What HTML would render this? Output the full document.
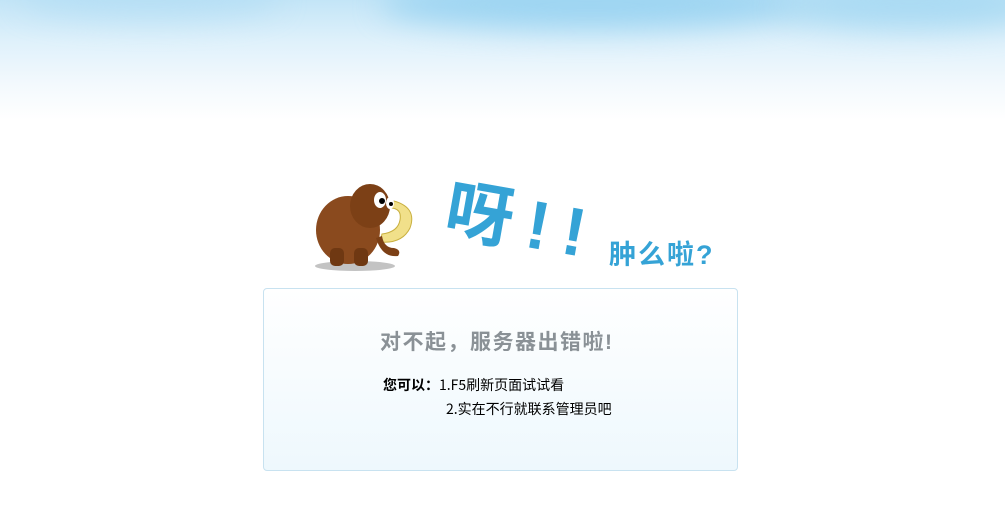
<!DOCTYPE html>
<html><head><meta charset="utf-8"><style>
body{margin:0;width:1005px;height:507px;background:#fff;position:relative;overflow:hidden;font-family:"Liberation Sans","Noto Sans CJK SC",sans-serif}
.sky{position:absolute;left:0;top:0;width:1005px;height:120px;background:linear-gradient(#c3e5f7 0%,#dff1fb 35%,#f3f9fd 70%,#fff 100%)}
.c{position:absolute;border-radius:50%;filter:blur(14px)}
.ya{position:absolute;left:452px;top:176px;font-size:68px;font-weight:bold;color:#35a3d6;transform:rotate(10deg);transform-origin:left top;letter-spacing:14px;line-height:1}
.zm{position:absolute;left:609px;top:242px;font-size:27px;font-weight:bold;color:#35a3d6;line-height:1;letter-spacing:2px}
.box{position:absolute;left:263px;top:288px;width:473px;height:181px;border:1px solid #c8e2f0;border-radius:4px;background:linear-gradient(#fff,#eef8fd)}
.t1{position:absolute;left:380px;top:326px;font-size:21px;font-weight:bold;color:#8a9196;letter-spacing:1.5px}
.t2{position:absolute;left:383px;top:373px;font-size:14px;color:#000;line-height:24px}
.m{font-family:'Noto Sans CJK SC',monospace;font-size:14px}
</style></head><body>
<div class="sky">
<div class="c" style="left:380px;top:-20px;width:420px;height:50px;background:rgba(140,205,240,.7)"></div>
<div class="c" style="left:780px;top:-15px;width:260px;height:45px;background:rgba(150,210,240,.6)"></div>
<div class="c" style="left:20px;top:-20px;width:260px;height:40px;background:rgba(170,218,243,.5)"></div>
</div>
<svg style="position:absolute;left:310px;top:178px" width="110" height="96" viewBox="0 0 110 96">
<ellipse cx="45" cy="88" rx="40" ry="5" fill="#888" opacity=".5"/>
<path d="M80 22 Q108 28 100 50 Q92 66 70 64 L72 56 Q88 54 90 42 Q92 30 80 30Z" fill="#f1e08a" stroke="#c9b040"/>
<ellipse cx="38" cy="52" rx="32" ry="34" fill="#8a4a1e"/>
<ellipse cx="60" cy="28" rx="20" ry="22" fill="#7c4016"/>
<rect x="20" y="70" width="14" height="18" rx="5" fill="#6f3812"/>
<rect x="44" y="70" width="14" height="18" rx="5" fill="#6f3812"/>
<path d="M66 60 Q72 80 88 78 Q92 72 84 70 Q74 70 72 58Z" fill="#7c4016"/>
<ellipse cx="70" cy="22" rx="6" ry="8" fill="#fff"/><circle cx="72" cy="23" r="3" fill="#000"/>
<ellipse cx="80" cy="25" rx="4" ry="6" fill="#fff"/><circle cx="81" cy="26" r="2" fill="#000"/>
</svg>
<div class="ya">呀!!</div>
<div class="zm">肿么啦?</div>
<div class="box"></div>
<div class="t1">对不起，服务器出错啦!</div>
<div class="t2"><b>您可以：</b><span class="m">1.F5刷新页面试试看</span><br><span class="m" style="margin-left:63px">2.实在不行就联系管理员吧</span></div>
</body></html>
